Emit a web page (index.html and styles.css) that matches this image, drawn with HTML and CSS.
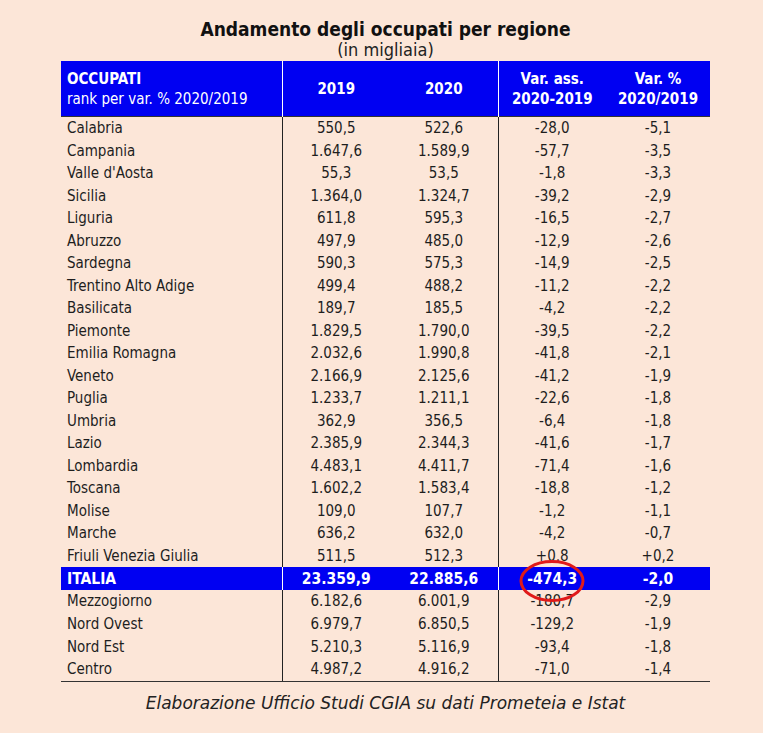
FILE: index.html
```html
<!DOCTYPE html>
<html lang="it">
<head>
<meta charset="utf-8">
<title>Andamento degli occupati per regione</title>
<link rel="stylesheet" href="styles.css">
</head>
<body>
<div class="page">
  <div class="wrap">
    <h1 class="title">Andamento degli occupati per regione</h1>
    <div class="subtitle">(in migliaia)</div>
    <table class="tbl">
      <colgroup>
        <col class="c-name"><col class="c-num"><col class="c-num"><col class="c-num"><col class="c-num2">
      </colgroup>
      <thead>
        <tr>
          <th class="h-name"><div class="h-strong">OCCUPATI</div><div class="h-light">rank per var. % 2020/2019</div></th>
          <th class="sep">2019</th>
          <th>2020</th>
          <th class="sep">Var. ass.<br>2020-2019</th>
          <th>Var. %<br>2020/2019</th>
        </tr>
      </thead>
      <tbody>
        <tr><td class="n">Calabria</td><td class="sep">550,5</td><td>522,6</td><td class="sep">-28,0</td><td>-5,1</td></tr>
        <tr><td class="n">Campania</td><td class="sep">1.647,6</td><td>1.589,9</td><td class="sep">-57,7</td><td>-3,5</td></tr>
        <tr><td class="n">Valle d'Aosta</td><td class="sep">55,3</td><td>53,5</td><td class="sep">-1,8</td><td>-3,3</td></tr>
        <tr><td class="n">Sicilia</td><td class="sep">1.364,0</td><td>1.324,7</td><td class="sep">-39,2</td><td>-2,9</td></tr>
        <tr><td class="n">Liguria</td><td class="sep">611,8</td><td>595,3</td><td class="sep">-16,5</td><td>-2,7</td></tr>
        <tr><td class="n">Abruzzo</td><td class="sep">497,9</td><td>485,0</td><td class="sep">-12,9</td><td>-2,6</td></tr>
        <tr><td class="n">Sardegna</td><td class="sep">590,3</td><td>575,3</td><td class="sep">-14,9</td><td>-2,5</td></tr>
        <tr><td class="n">Trentino Alto Adige</td><td class="sep">499,4</td><td>488,2</td><td class="sep">-11,2</td><td>-2,2</td></tr>
        <tr><td class="n">Basilicata</td><td class="sep">189,7</td><td>185,5</td><td class="sep">-4,2</td><td>-2,2</td></tr>
        <tr><td class="n">Piemonte</td><td class="sep">1.829,5</td><td>1.790,0</td><td class="sep">-39,5</td><td>-2,2</td></tr>
        <tr><td class="n">Emilia Romagna</td><td class="sep">2.032,6</td><td>1.990,8</td><td class="sep">-41,8</td><td>-2,1</td></tr>
        <tr><td class="n">Veneto</td><td class="sep">2.166,9</td><td>2.125,6</td><td class="sep">-41,2</td><td>-1,9</td></tr>
        <tr><td class="n">Puglia</td><td class="sep">1.233,7</td><td>1.211,1</td><td class="sep">-22,6</td><td>-1,8</td></tr>
        <tr><td class="n">Umbria</td><td class="sep">362,9</td><td>356,5</td><td class="sep">-6,4</td><td>-1,8</td></tr>
        <tr><td class="n">Lazio</td><td class="sep">2.385,9</td><td>2.344,3</td><td class="sep">-41,6</td><td>-1,7</td></tr>
        <tr><td class="n">Lombardia</td><td class="sep">4.483,1</td><td>4.411,7</td><td class="sep">-71,4</td><td>-1,6</td></tr>
        <tr><td class="n">Toscana</td><td class="sep">1.602,2</td><td>1.583,4</td><td class="sep">-18,8</td><td>-1,2</td></tr>
        <tr><td class="n">Molise</td><td class="sep">109,0</td><td>107,7</td><td class="sep">-1,2</td><td>-1,1</td></tr>
        <tr><td class="n">Marche</td><td class="sep">636,2</td><td>632,0</td><td class="sep">-4,2</td><td>-0,7</td></tr>
        <tr><td class="n">Friuli Venezia Giulia</td><td class="sep">511,5</td><td>512,3</td><td class="sep">+0,8</td><td>+0,2</td></tr>
        <tr class="total"><td class="n">ITALIA</td><td class="sep">23.359,9</td><td>22.885,6</td><td class="sep ring-cell"><span class="ring-wrap">-474,3<svg class="ring" width="68" height="44" viewBox="0 0 68 44" aria-hidden="true"><ellipse cx="34" cy="22" rx="31" ry="19.5" fill="none" stroke="#e01a1a" stroke-width="3"/></svg></span></td><td>-2,0</td></tr>
        <tr class="after"><td class="n">Mezzogiorno</td><td class="sep">6.182,6</td><td>6.001,9</td><td class="sep">-180,7</td><td>-2,9</td></tr>
        <tr class="after"><td class="n">Nord Ovest</td><td class="sep">6.979,7</td><td>6.850,5</td><td class="sep">-129,2</td><td>-1,9</td></tr>
        <tr class="after"><td class="n">Nord Est</td><td class="sep">5.210,3</td><td>5.116,9</td><td class="sep">-93,4</td><td>-1,8</td></tr>
        <tr class="after last"><td class="n">Centro</td><td class="sep">4.987,2</td><td>4.916,2</td><td class="sep">-71,0</td><td>-1,4</td></tr>
      </tbody>
    </table>
    <div class="source">Elaborazione Ufficio Studi CGIA su dati Prometeia e Istat</div>
  </div>
</div>
</body>
</html>
```

FILE: styles.css
```css
html, body {
  margin: 0;
  padding: 0;
  background: #fce6d8;
}
body {
  font-family: "DejaVu Sans", Verdana, sans-serif;
  font-stretch: condensed;
  color: #1e1e1e;
  width: 763px;
  height: 733px;
  overflow: hidden;
}
.page {
  padding-top: 19px;
}
.wrap {
  width: 649px;
  margin-left: 61px;
}
.title {
  margin: 0;
  text-align: center;
  font-size: 19px;
  line-height: 21px;
  height: 21px;
  font-weight: bold;
  color: #111;
}
.subtitle {
  text-align: center;
  font-size: 18px;
  line-height: 17px;
  height: 21px;
  padding-top: 1px;
  box-sizing: border-box;
  color: #222;
}
.tbl {
  width: 649px;
  border-collapse: collapse;
  table-layout: fixed;
}
.c-name { width: 221px; }
.c-num { width: 108px; }
.c-num2 { width: 104px; }
.tbl thead th {
  background: #0000f2;
  color: #fff;
  height: 55px;
  padding: 0;
  font-size: 15px;
  line-height: 20px;
  font-weight: bold;
  text-align: center;
  vertical-align: middle;
}
.tbl thead th.sep {
  border-left: 1px solid #fff;
}
.tbl thead th.h-name {
  text-align: left;
  padding-left: 6px;
}
.h-strong {
  font-weight: bold;
}
.h-light {
  font-weight: normal;
}
.tbl tbody td {
  height: 22.5px;
  padding: 0;
  font-size: 15px;
  line-height: 18px;
  text-align: center;
  vertical-align: middle;
  white-space: nowrap;
}
.tbl tbody tr.after td {
  height: 22.7px;
}
.tbl tbody td.n {
  text-align: left;
  padding-left: 6px;
}
.tbl tbody td.sep {
  border-left: 1px solid #222;
}
.tbl tbody tr:first-child td {
  border-top: 1px solid #333;
}
.tbl tbody tr.total td {
  height: 23px;
  background: #0000f2;
  color: #fff;
  font-weight: bold;
  font-size: 15.5px;
}
.tbl tbody tr.total td.sep {
  border-left-color: #fff;
}
.tbl tbody tr.last td {
  border-bottom: 1px solid #333;
}
.ring-wrap {
  position: relative;
  display: inline-block;
}
.ring {
  position: absolute;
  left: 50%;
  top: 50%;
  margin-left: -34px;
  margin-top: -20px;
  overflow: visible;
}
.source {
  text-align: center;
  font-style: italic;
  font-stretch: normal;
  font-size: 17px;
  line-height: 20px;
  margin-top: 11px;
  color: #222;
}
```
